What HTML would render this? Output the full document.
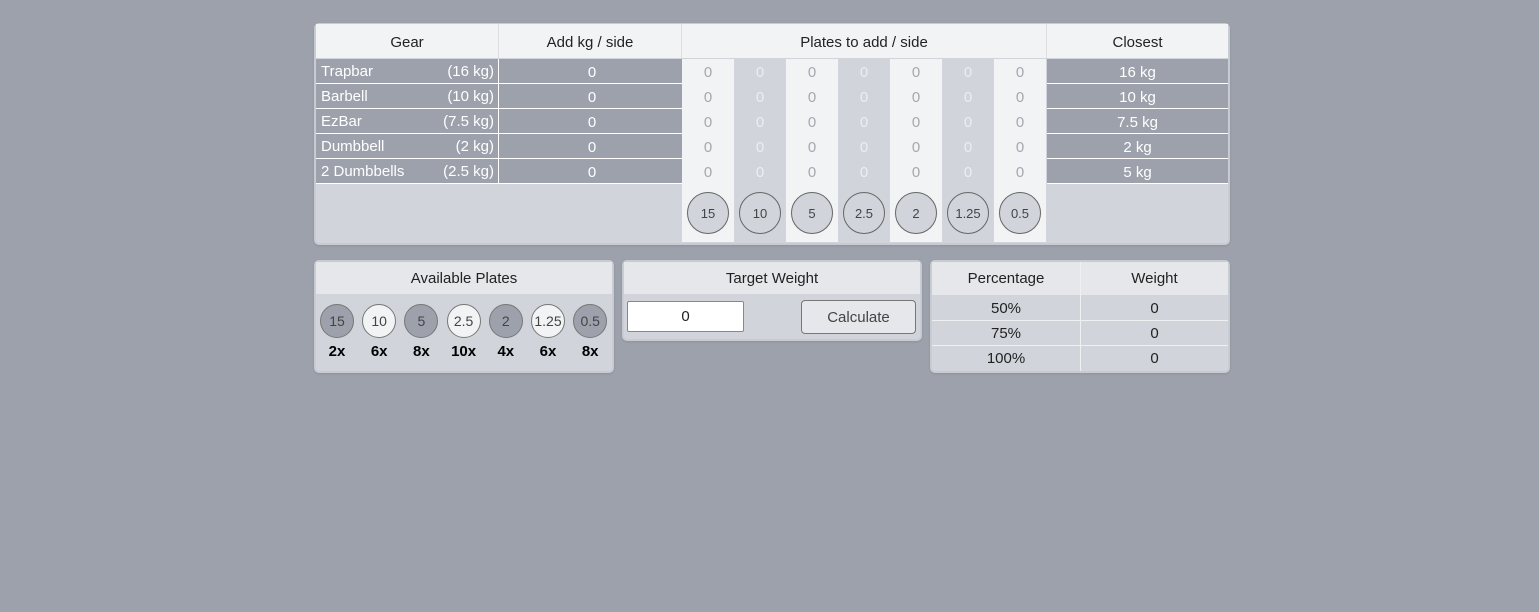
<!DOCTYPE html><html><head><style>
*{box-sizing:border-box;margin:0;padding:0}
body{width:1539px;height:612px;background:#9ca1ab;font-family:"Liberation Sans",sans-serif;font-size:15px;color:#222;position:relative;overflow:hidden}
.a{position:absolute}
.c{display:flex;align-items:center;justify-content:center}
.card{position:absolute;background:#d1d4da;border:2px solid #c8ccd2;border-radius:5px;overflow:hidden;box-shadow:0 1px 2px rgba(0,0,0,0.1)}
.circ{position:absolute;border-radius:50%;border:1px solid #666;display:flex;align-items:center;justify-content:center;font-size:13px;color:#444}
</style></head><body>
<div class="card" style="left:314px;top:23px;width:916px;height:222px"></div>
<div class="a" style="left:316px;top:24px;width:912px;height:34px;background:#f2f3f5"></div>
<div class="a c" style="left:316px;top:25px;width:182px;height:34px">Gear</div>
<div class="a" style="left:498px;top:24px;width:1px;height:34px;background:#dcdee2"></div>
<div class="a c" style="left:499px;top:25px;width:182px;height:34px">Add kg / side</div>
<div class="a" style="left:681px;top:24px;width:1px;height:34px;background:#dcdee2"></div>
<div class="a c" style="left:682px;top:25px;width:364px;height:34px">Plates to add / side</div>
<div class="a" style="left:1046px;top:24px;width:1px;height:34px;background:#dcdee2"></div>
<div class="a c" style="left:1047px;top:25px;width:181px;height:34px">Closest</div>
<div class="a" style="left:316px;top:58px;width:912px;height:1px;background:#d1d4da"></div>
<div class="a" style="left:316px;top:59px;width:366px;height:125px;background:#9ca1ab"></div>
<div class="a" style="left:1047px;top:59px;width:181px;height:125px;background:#9ca1ab"></div>
<div class="a" style="left:682px;top:59px;width:52px;height:183px;background:#f2f3f5"></div>
<div class="a" style="left:786px;top:59px;width:52px;height:183px;background:#f2f3f5"></div>
<div class="a" style="left:890px;top:59px;width:52px;height:183px;background:#f2f3f5"></div>
<div class="a" style="left:994px;top:59px;width:52px;height:183px;background:#f2f3f5"></div>
<div class="a" style="left:498px;top:59px;width:1px;height:125px;background:#fff"></div>
<div id="rows"></div>
<script>
var g=[["Trapbar","(16 kg)","16 kg"],["Barbell","(10 kg)","10 kg"],["EzBar","(7.5 kg)","7.5 kg"],["Dumbbell","(2 kg)","2 kg"],["2 Dumbbells","(2.5 kg)","5 kg"]];
var h="";
g.forEach(function(r,i){var t=59+i*25,tt=t+1;
h+='<div class="a" style="left:321px;top:'+tt+'px;height:24px;line-height:24px;color:#fff">'+r[0]+'</div>';
h+='<div class="a" style="left:400px;width:94px;text-align:right;top:'+tt+'px;height:24px;line-height:24px;color:#fff">'+r[1]+'</div>';
h+='<div class="a c" style="left:499px;width:186px;top:'+tt+'px;height:24px;color:#fff">0</div>';
h+='<div class="a c" style="left:1047px;width:181px;top:'+tt+'px;height:24px;color:#fff">'+r[2]+'</div>';
for(var j=0;j<7;j++)h+='<div class="a c" style="left:'+(682+j*52)+'px;width:52px;top:'+tt+'px;height:24px;color:'+(j%2?'#eceef1':'#a4a8b0')+'">0</div>';
h+='<div class="a" style="left:316px;width:366px;top:'+(t+24)+'px;height:1px;background:#fff"></div><div class="a" style="left:1047px;width:181px;top:'+(t+24)+'px;height:1px;background:#fff"></div>';
});
var p=["15","10","5","2.5","2","1.25","0.5"];
p.forEach(function(v,j){h+='<div class="circ" style="left:'+(687+j*52)+'px;top:192px;width:42px;height:42px;background:#d1d4da">'+v+'</div>';});
document.getElementById("rows").innerHTML=h;
</script>
<div class="card" style="left:314px;top:260px;width:300px;height:113px"></div>
<div class="a c" style="left:316px;top:262px;width:296px;height:32px;background:#e6e7ea">Available Plates</div>
<div id="av"></div>
<script>
var h2="",q=["15","10","5","2.5","2","1.25","0.5"],n=["2x","6x","8x","10x","4x","6x","8x"];
q.forEach(function(v,j){var cx=337+j*42.2;
h2+='<div class="circ" style="left:'+(cx-17)+'px;top:304px;width:34px;height:34px;font-size:14px;border-color:#777;background:'+(j%2?'#f2f3f5':'#9ca1ab')+'">'+v+'</div>';
h2+='<div class="a c" style="left:'+(cx-20)+'px;top:341px;width:40px;height:20px;font-weight:bold;color:#000">'+n[j]+'</div>';});
document.getElementById("av").innerHTML=h2;
</script>
<div class="card" style="left:622px;top:260px;width:300px;height:81px"></div>
<div class="a c" style="left:624px;top:262px;width:296px;height:32px;background:#e6e7ea">Target Weight</div>
<div class="a c" style="left:627px;top:301px;width:117px;height:31px;background:#fff;border:1px solid #888;border-radius:2px">0</div>
<div class="a c" style="left:801px;top:300px;width:115px;height:34px;background:#e6e7ea;border:1px solid #777;border-radius:4px;color:#444">Calculate</div>
<div class="card" style="left:930px;top:260px;width:300px;height:113px"></div>
<div class="a" style="left:932px;top:262px;width:296px;height:33px;background:#e6e7ea"></div>
<div class="a c" style="left:932px;top:262px;width:148px;height:33px">Percentage</div>
<div class="a c" style="left:1081px;top:262px;width:147px;height:33px">Weight</div>
<div class="a" style="left:1080px;top:262px;width:1px;height:109px;background:#eef0f2"></div>
<div class="a c" style="left:932px;top:296px;width:148px;height:24px">50%</div>
<div class="a c" style="left:1081px;top:296px;width:147px;height:24px">0</div>
<div class="a" style="left:932px;top:320px;width:296px;height:1px;background:#eef0f2"></div>
<div class="a c" style="left:932px;top:321px;width:148px;height:24px">75%</div>
<div class="a c" style="left:1081px;top:321px;width:147px;height:24px">0</div>
<div class="a" style="left:932px;top:345px;width:296px;height:1px;background:#eef0f2"></div>
<div class="a c" style="left:932px;top:346px;width:148px;height:24px">100%</div>
<div class="a c" style="left:1081px;top:346px;width:147px;height:24px">0</div>
</body></html>
